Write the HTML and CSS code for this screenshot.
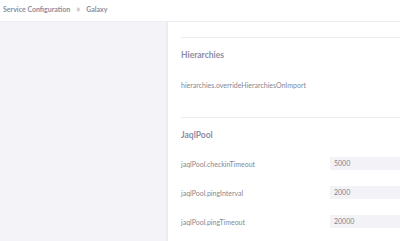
FILE: index.html
```html
<!DOCTYPE html>
<html>
<head>
<meta charset="utf-8">
<link rel="stylesheet" href="styles.css">
</head>
<body>
<header class="topbar">
  <span class="crumb">Service Configuration</span>
  <span class="sep">»</span>
  <span class="crumb">Galaxy</span>
</header>
<div class="layout">
  <aside class="sidebar"></aside>
  <main class="panel">
    <section class="section section-first">
      <h2 class="heading">Hierarchies</h2>
      <div class="row row-toggle">
        <span class="label">hierarchies.overrideHierarchiesOnImport</span>
      </div>
    </section>
    <section class="section">
      <h2 class="heading">JaqlPool</h2>
      <div class="row">
        <span class="label">jaqlPool.checkinTimeout</span>
        <span class="field">5000</span>
      </div>
      <div class="row">
        <span class="label">jaqlPool.pingInterval</span>
        <span class="field">2000</span>
      </div>
      <div class="row">
        <span class="label">jaqlPool.pingTimeout</span>
        <span class="field">20000</span>
      </div>
    </section>
  </main>
</div>
</body>
</html>
```
FILE: styles.css
```css
html, body {
  margin: 0;
  padding: 0;
  width: 400px;
  height: 241px;
  overflow: hidden;
  background: #ffffff;
  font-family: Lato, "Open Sans", sans-serif;
}
.topbar {
  height: 22px;
  border-bottom: 1px solid #ededf1;
  display: flex;
  align-items: center;
  gap: 6px;
  padding-left: 3px;
  padding-bottom: 4px;
  box-sizing: border-box;
  color: #8a8ea4;
  font-size: 7px;
  font-weight: 700;
}
.sep {
  font-weight: 400;
  font-size: 9px;
  color: #a0a3b4;
}
.layout {
  display: flex;
  height: 219px;
}
.sidebar {
  width: 166px;
  background: #f3f3f8;
  border-right: 2px solid #ebebf0;
  flex: none;
}
.panel {
  flex: 1;
  background: #ffffff;
  padding: 15px 0 0 13px;
  overflow: hidden;
}
.section {
  border-top: 1px solid #ececf1;
  padding: 10px 0 0 0;
}
.section-first {
  padding-bottom: 16px;
}
.heading {
  margin: 0 0 7px 0;
  height: 14px;
  line-height: 14px;
  font-size: 8.5px;
  font-weight: 700;
  color: #8a8ea6;
}
.row {
  height: 29px;
  display: flex;
  align-items: center;
}
.row-toggle {
  height: 32px;
}
.label {
  width: 149px;
  flex: none;
  font-size: 7px;
  color: #858791;
  white-space: nowrap;
}
.field {
  flex: none;
  width: 120px;
  height: 13px;
  line-height: 13px;
  background: #f3f3f7;
  padding-left: 4px;
  font-size: 7px;
  color: #7f828c;
}
```
